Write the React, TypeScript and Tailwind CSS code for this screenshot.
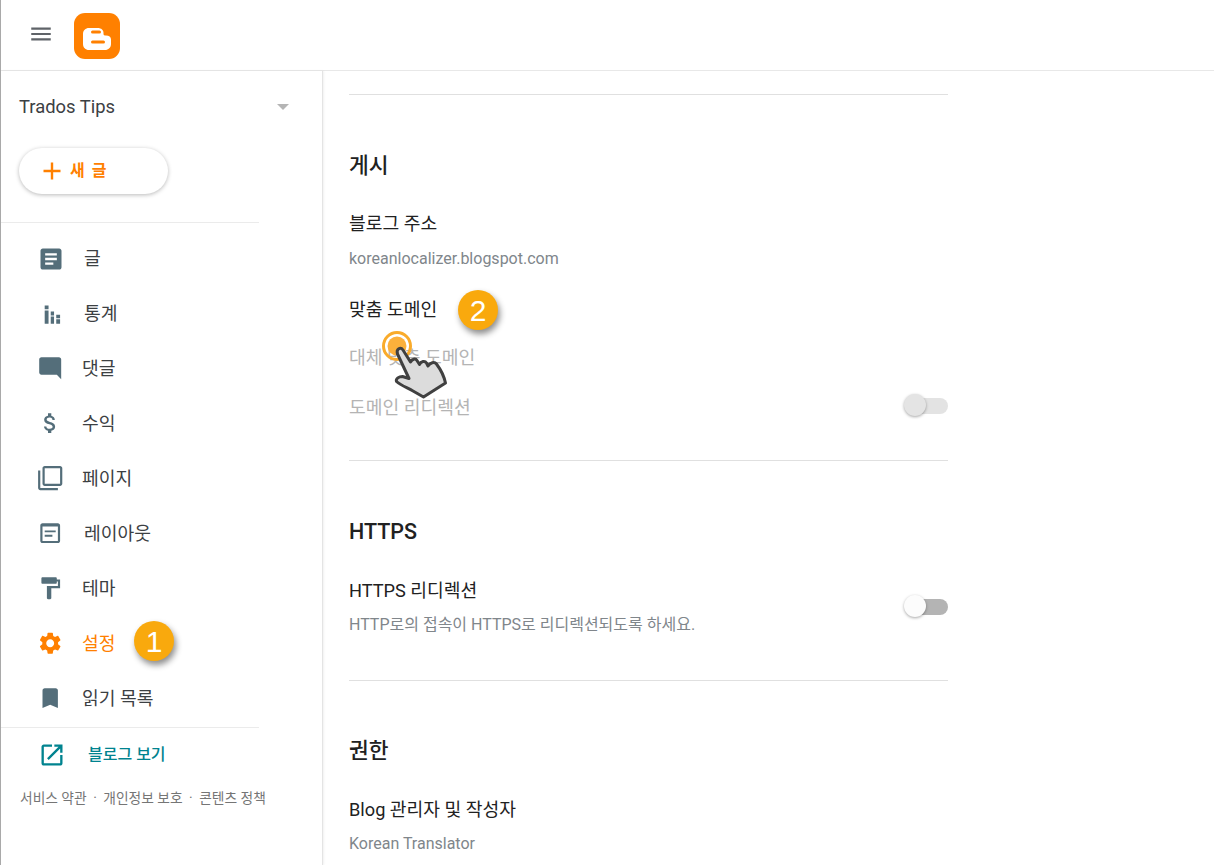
import React from "react";

const P = {
  article: "M19 3H5c-1.1 0-2 .9-2 2v14c0 1.1.9 2 2 2h14c1.1 0 2-.9 2-2V5c0-1.1-.9-2-2-2zM7 7h10v2H7V7zm0 4h10v2H7v-2zm0 4h7v2H7v-2z",
  comment: "M21.99 4c0-1.1-.89-2-1.99-2H4c-1.1 0-2 .9-2 2v12c0 1.1.9 2 2 2h14l4 4-.01-18z",
  money: "M11.8 10.9c-2.27-.59-3-1.2-3-2.15 0-1.09 1.01-1.85 2.7-1.85 1.78 0 2.44.85 2.5 2.1h2.21c-.07-1.72-1.12-3.3-3.21-3.81V3h-3v2.16c-1.94.42-3.5 1.68-3.5 3.61 0 2.31 1.91 3.46 4.7 4.13 2.5.6 3 1.48 3 2.41 0 .69-.49 1.79-2.7 1.79-2.06 0-2.87-.92-2.98-2.1h-2.2c.12 2.19 1.76 3.42 3.68 3.83V21h3v-2.15c1.95-.37 3.5-1.5 3.5-3.55 0-2.84-2.43-3.81-4.7-4.4z",
  pages: "M3 5H1v16c0 1.1.9 2 2 2h16v-2H3V5zm18-4H7c-1.1 0-2 .9-2 2v14c0 1.1.9 2 2 2h14c1.1 0 2-.9 2-2V3c0-1.1-.9-2-2-2zm0 16H7V3h14v14z",
  layout: "M19 3H5c-1.1 0-2 .9-2 2v14c0 1.1.9 2 2 2h14c1.1 0 2-.9 2-2V5c0-1.1-.9-2-2-2zm0 16H5V6h14v13zM7 9.500h10v1.700H7V9.500zm0 4h7v1.700H7v-1.700z",
  paint: "M18 4V3c0-.55-.45-1-1-1H5c-.55 0-1 .45-1 1v4c0 .55.45 1 1 1h12c.55 0 1-.45 1-1V6h1v4H9v11c0 .55.45 1 1 1h2c.55 0 1-.45 1-1v-9h8V4h-3z",
  gear: "M19.14 12.94c.04-.3.06-.61.06-.94 0-.32-.02-.64-.07-.94l2.03-1.58c.18-.14.23-.41.12-.61l-1.92-3.32c-.12-.22-.37-.29-.59-.22l-2.39.96c-.5-.38-1.03-.7-1.62-.94l-.36-2.54c-.04-.24-.24-.41-.48-.41h-3.84c-.24 0-.43.17-.47.41l-.36 2.54c-.59.24-1.13.57-1.62.94l-2.39-.96c-.22-.08-.47 0-.59.22L2.74 8.87c-.12.21-.08.47.12.61l2.03 1.58c-.05.3-.09.63-.09.94s.02.64.07.94l-2.03 1.58c-.18.14-.23.41-.12.61l1.92 3.32c.12.22.37.29.59.22l2.39-.96c.5.38 1.03.7 1.62.94l.36 2.54c.05.24.24.41.48.41h3.84c.24 0 .44-.17.47-.41l.36-2.54c.59-.24 1.13-.56 1.62-.94l2.39.96c.22.08.47 0 .59-.22l1.92-3.32c.12-.22.07-.47-.12-.61l-2.01-1.58zM12 15.6c-1.98 0-3.6-1.62-3.6-3.6s1.62-3.6 3.6-3.6 3.6 1.62 3.6 3.6-1.62 3.6-3.6 3.6z",
  bookmark: "M17 3H7c-1.1 0-1.99.9-1.99 2L5 21l7-3 7 3V5c0-1.1-.9-2-2-2z",
  stats: "M7 5h3.500v3.500H7V5zm0 4.500h3.500V21.500H7V9.500zM12.500 10.500h3v3.500h-3v-3.500zm0 4.500h3v6.500h-3V15zM17.500 13.500H21v3h-3.500v-3zm0 4H21v4h-3.500v-4z",
  open: "M19 19H5V5h7V3H5c-1.11 0-2 .9-2 2v14c0 1.1.89 2 2 2h14c1.1 0 2-.9 2-2v-7h-2v7zM14 3v2h3.59l-9.83 9.83 1.41 1.41L19 6.41V10h2V3h-7z",
};

function Icon({ d, className }: { d: string; className: string }) {
  return (
    <svg viewBox="0 0 24 24" className={className} fill="currentColor">
      <path d={d} fillRule="evenodd" />
    </svg>
  );
}

const navItems = [
  { d: P.article, label: "글", ml: "ml-[19px]", size: "h-[28px] w-[28px]" },
  { d: P.stats, label: "통계", ml: "ml-[20.6px]", size: "h-[26.4px] w-[26.4px]" },
  { d: P.comment, label: "댓글", ml: "ml-[18.6px]", size: "h-[26.4px] w-[26.4px]" },
  { d: P.money, label: "수익", ml: "ml-[18.6px]", size: "h-[26.4px] w-[26.4px]" },
  { d: P.pages, label: "페이지", ml: "ml-[18.6px]", size: "h-[26.4px] w-[26.4px]" },
  { d: P.layout, label: "레이아웃", ml: "ml-[20.6px]", size: "h-[26.4px] w-[26.4px]" },
  { d: P.paint, label: "테마", ml: "ml-[18.6px]", size: "h-[26.4px] w-[26.4px]" },
  { d: P.gear, label: "설정", ml: "ml-[18.6px]", size: "h-[26.4px] w-[26.4px]", active: true },
  { d: P.bookmark, label: "읽기 목록", ml: "ml-[18.6px]", size: "h-[26.4px] w-[26.4px]" },
];

function Badge({ n, className }: { n: string; className: string }) {
  return (
    <div
      className={`absolute flex h-10 w-10 items-center justify-center rounded-full bg-[#f9a90d] text-[30px] font-normal text-white shadow-[2px_4px_6px_rgba(0,0,0,0.45)] ${className}`}
      style={{ fontFamily: "'Liberation Sans', sans-serif" }}
    >
      {n}
    </div>
  );
}

function Toggle({ disabled }: { disabled?: boolean }) {
  return (
    <div className="relative h-4 w-[44px] shrink-0">
      <div className={`absolute left-[6px] right-0 top-0 h-4 rounded-full ${disabled ? "bg-[#e3e3e3]" : "bg-[#b4b4b4]"}`} />
      <div className={`absolute left-0 top-[-4px] h-[22px] w-[22px] rounded-full shadow-[0_1px_3px_rgba(0,0,0,0.35)] ${disabled ? "bg-[#e4e4e4]" : "bg-[#fcfcfc]"}`} />
    </div>
  );
}

function Heading({ children, mt }: { children: React.ReactNode; mt: string }) {
  return <div className={`flex h-[30px] items-center pt-[3px] text-[21.5px] font-medium text-[#212121] ${mt}`}>{children}</div>;
}

export default function App() {
  return (
    <div
      className="relative h-[865px] w-[1214px] overflow-hidden border-l border-[#a9a9a9] bg-white"
      style={{ fontFamily: "Roboto, 'Noto Sans CJK KR', sans-serif" }}
    >
      <header className="flex h-[71px] items-center border-b border-[#e8e8e8]">
        <svg viewBox="0 0 24 24" className="mb-[2px] ml-[27px] h-[26px] w-[26px] text-[#5f6368]" fill="currentColor">
          <path d="M3 18h18v-2H3v2zm0-5h18v-2H3v2zm0-7v2h18V6H3z" />
        </svg>
        <svg viewBox="0 0 46 46" className="mb-[-1px] ml-[20px] h-[46px] w-[46px]">
          <rect width="46" height="46" rx="11" fill="#ff8000" />
          <path d="M15 15h8.500c4 0 6 2.200 6 5v1c0 1.200 1 1.500 2.500 1.500 3 0 5 1.500 5 4V31c0 3.600-2.600 6-6 6H15c-3.500 0-6-2.400-6-6V21c0-3.600 2.500-6 6-6z" fill="#fff" />
          <rect x="17" y="17.500" width="10" height="3" rx="1.500" fill="#ff8000" />
          <rect x="17" y="27.500" width="14" height="3" rx="1.500" fill="#ff8000" />
        </svg>
      </header>
      <div className="flex h-[794px]">
        <aside className="flex w-[322px] shrink-0 flex-col border-r border-[#e4e4e4] shadow-[1px_0_2px_rgba(0,0,0,0.06)]">
          <div className="flex h-[72px] items-center justify-between pl-[18px] pr-[33px] text-[18.4px] text-[#3c4043]">
            <span>Trados Tips</span>
            <span className="h-0 w-0 border-x-[6px] border-t-[6px] border-x-transparent border-t-[#b5b5b5]" />
          </div>
          <div className="ml-[18px] mt-[5px] flex h-[46px] w-[149px] items-center rounded-full bg-white pl-[24px] text-[#ff8000] shadow-[0_1px_4px_rgba(0,0,0,0.28)]">
            <svg viewBox="0 0 18 18" className="h-[18px] w-[18px]" fill="currentColor">
              <path d="M7.800 0.500h2.400v7.300h7.300v2.400h-7.300v7.300H7.800v-7.300H0.500V7.800h7.300V0.500z" />
            </svg>
            <span className="ml-[9px] text-[16px] font-bold tracking-[1.5px]">새 글</span>
          </div>
          <div className="mt-[28px] w-[258px] border-t border-[#ebebeb]" />
          <nav className="flex flex-col pb-[1px] pt-[8px]">
            {navItems.map((it) => (
              <div key={it.label} className={`flex h-[55px] items-center pl-[36px] ${it.active ? "text-[#ff8000]" : "text-[#3c4043]"}`}>
                <Icon d={it.d} className={`${it.size} ${it.active ? "text-[#ff8000]" : "text-[#546e7a]"}`} />
                <span className={`${it.ml} text-[18.2px]`}>{it.label}</span>
              </div>
            ))}
          </nav>
          <div className="w-[258px] border-t border-[#ebebeb]" />
          <div className="flex h-[53px] items-center pl-[37px] text-[#00838f]">
            <Icon d={P.open} className="h-[28px] w-[28px]" />
            <span className="ml-[22px] text-[16px] font-medium">블로그 보기</span>
          </div>
          <div className="mt-[7px] whitespace-nowrap pl-[19px] text-[13.750px] text-[#757575]">
            <span>서비스 약관</span>
            <span className="mx-[6.500px]">·</span>
            <span>개인정보 보호</span>
            <span className="mx-[6.500px]">·</span>
            <span>콘텐츠 정책</span>
          </div>
        </aside>
        <main className="ml-[26px] w-[599px]">
          <div className="mt-[23px] border-t border-[#e0e0e0]" />
          <Heading mt="mt-[55px]">게시</Heading>
          <div className="mt-[30px] flex h-6 items-center pt-[4px] text-[18.200px] text-[#212121]">블로그 주소</div>
          <div className="mt-[14px] flex h-5 items-center pt-[2px] text-[16px] text-[#80868b]">koreanlocalizer.blogspot.com</div>
          <div className="mt-[29px] flex h-6 items-center pt-[2px] text-[18.200px] text-[#212121]">맞춤 도메인</div>
          <div className="mt-[24px] flex h-6 items-center pt-[2px] text-[18.200px] text-[#b4b4b4]">대체 맞춤 도메인</div>
          <div className="mt-[25px] flex h-6 items-center justify-between text-[18.200px] text-[#b4b4b4]">
            <span className="pt-[4px]">도메인 리디렉션</span>
            <Toggle disabled />
          </div>
          <div className="mt-[42px] border-t border-[#e0e0e0]" />
          <Heading mt="mt-[55px]">HTTPS</Heading>
          <div className="mt-[32px] flex h-[57px] items-center justify-between pt-[1px]">
            <div>
              <div className="flex h-6 items-center text-[18.200px] text-[#212121]">HTTPS 리디렉션</div>
              <div className="mt-[12px] flex h-5 items-center text-[16px] text-[#80868b]">HTTP로의 접속이 HTTPS로 리디렉션되도록 하세요.</div>
            </div>
            <Toggle />
          </div>
          <div className="mt-[45px] border-t border-[#e0e0e0]" />
          <Heading mt="mt-[54px]">권한</Heading>
          <div className="mt-[32px] flex h-6 items-center pt-[2px] text-[18.200px] text-[#212121]">Blog 관리자 및 작성자</div>
          <div className="mt-[12px] flex h-5 items-center pt-[2px] text-[16px] text-[#80868b]">Korean Translator</div>
        </main>
      </div>

      <Badge n="1" className="left-[133px] top-[621px]" />
      <Badge n="2" className="left-[457px] top-[290px]" />
      <svg viewBox="380 330 70 72" className="absolute left-[379px] top-[330px] h-[72px] w-[70px]">
        <circle cx="397" cy="346" r="13.500" fill="none" stroke="#f9ab2b" strokeWidth="3" />
        <circle cx="397" cy="346" r="9.500" fill="#fbb03b" />
        <path
          d="M397.500 354 C396 349 400.500 346.500 403 350 L410.500 362 C412 359 415.500 358 417 360.500 L419.500 364.500 C421 361 425 360.500 426.500 363 L428 366 C430 362.500 434.500 361.500 436.500 364 C441 370 444 376 445.500 383 L423.500 397 L413 391 C408 388 401 385.500 396.500 381.500 C395.500 378.500 399 376.500 402.500 376.500 L409 378.500 Z"
          fill="#dcdcdc"
          stroke="#404040"
          strokeWidth="3"
          strokeLinejoin="round"
        />
      </svg>
    </div>
  );
}
